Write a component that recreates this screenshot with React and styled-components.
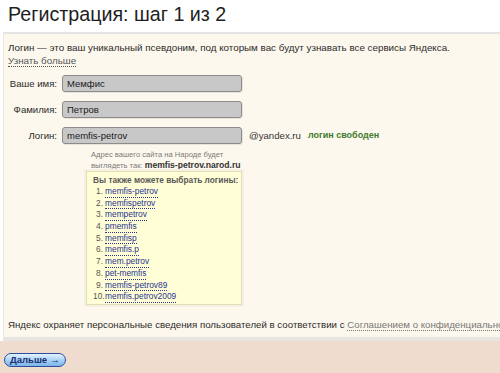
import styled, { createGlobalStyle } from "styled-components";

const GlobalStyle = createGlobalStyle`
  html, body {
    margin: 0;
    padding: 0;
    background: #fff;
  }
  body {
    font-family: "Liberation Sans", Arial, sans-serif;
    width: 500px;
    height: 373px;
    overflow: hidden;
  }
`;

const Page = styled.div`
  width: 500px;
  height: 373px;
  display: flex;
  flex-direction: column;
  overflow: hidden;
`;

const Header = styled.h1`
  margin: 0;
  height: 32px;
  box-sizing: border-box;
  padding: 3px 0 0 8px;
  font-size: 19.7px;
  font-weight: normal;
  color: #1e1e1e;
`;

const Panel = styled.div`
  margin-left: 3px;
  border-top: 2px solid #e4e4e4;
  border-left: 1px solid #ebe7dc;
  border-bottom: 4px solid #e8e5e0;
  background: #fdf8ed;
  padding: 7px 0 6px 4px;
  white-space: nowrap;
  overflow: hidden;
`;

const Intro = styled.p`
  margin: 0;
  font-size: 9.8px;
  line-height: 13px;
  color: #2b2b2b;
`;

const DottedLink = styled.a`
  color: ${(p) => p.$color || "#555"};
  text-decoration: none;
  border-bottom: 1px dotted ${(p) => p.$color || "#555"};
`;

const Form = styled.div`
  display: grid;
  grid-template-columns: 49px 180px auto;
  column-gap: 5px;
  row-gap: 9px;
  margin-top: 8px;
  align-items: center;
`;

const Label = styled.label`
  font-size: 9.6px;
  color: #2b2b2b;
  text-align: right;
`;

const Input = styled.div`
  box-sizing: border-box;
  height: 17px;
  background: #c8c8c8;
  border: 1px solid #8c8c8c;
  border-radius: 3px;
  box-shadow: 1px 1px 0 #e8e4da;
  font-size: 9.5px;
  line-height: 15px;
  padding-left: 4px;
  color: #1a1a1a;
`;

const After = styled.div`
  font-size: 9.6px;
  color: #333;
  padding-left: 2px;
  display: flex;
  gap: 7px;
`;

const Free = styled.span`
  color: #3d7a2f;
  font-weight: bold;
  font-size: 9px;
`;

const Hint = styled.div`
  grid-column: 2 / 4;
  margin-top: -4px;
  padding-left: 29px;
  font-size: 7.6px;
  line-height: 11px;
  color: #7a7a7a;
  b {
    color: #333;
    font-size: 8.6px;
  }
`;

const Suggest = styled.div`
  grid-column: 2 / 3;
  margin: -9px 0 0 24px;
  box-sizing: border-box;
  width: 156px;
  height: 134px;
  background: #fffed6;
  border: 1px solid #e4deb4;
  box-shadow: 0 0 0 2px #f4f0e4;
  padding: 2px 0 0 6px;
`;

const SuggestTitle = styled.div`
  font-size: 8.3px;
  font-weight: bold;
  color: #5a5a5a;
  line-height: 12px;
`;

const List = styled.ol`
  margin: 0;
  padding: 0;
  list-style: none;
`;

const Item = styled.li`
  display: flex;
  font-size: 8.4px;
  line-height: 11.7px;
  height: 11.7px;
`;

const Num = styled.span`
  width: 10px;
  text-align: right;
  padding-right: 2px;
  color: #555;
`;

const Legal = styled.p`
  margin: 13px 0 0;
  font-size: 9.7px;
  line-height: 13px;
  color: #2b2b2b;
`;

const Bottom = styled.div`
  flex: 1;
  background: #f0dbcf;
  padding: 12px 0 0 4px;
`;

const Next = styled.button`
  height: 14px;
  padding: 0 5px;
  border: 1px solid #2b4f9c;
  border-radius: 8px;
  background: linear-gradient(#e4f3ff, #9fcdf5 60%, #7db4e8);
  font-family: "Liberation Sans", Arial, sans-serif;
  font-size: 9.5px;
  font-weight: bold;
  line-height: 12px;
  color: #1a2f70;
  display: flex;
  align-items: center;
  gap: 3px;
  cursor: pointer;
`;

const logins = [
  "memfis-petrov",
  "memfispetrov",
  "mempetrov",
  "pmemfis",
  "memfisp",
  "memfis.p",
  "mem.petrov",
  "pet-memfis",
  "memfis-petrov89",
  "memfis.petrov2009",
];

export default function App() {
  return (
    <Page>
      <GlobalStyle />
      <Header>Регистрация: шаг 1 из 2</Header>
      <Panel>
        <Intro>
          Логин — это ваш уникальный псевдоним, под которым вас будут узнавать все сервисы Яндекса.
          <br />
          <DottedLink>Узнать больше</DottedLink>
        </Intro>
        <Form>
          <Label>Ваше имя:</Label>
          <Input>Мемфис</Input>
          <span />
          <Label>Фамилия:</Label>
          <Input>Петров</Input>
          <span />
          <Label>Логин:</Label>
          <Input>memfis-petrov</Input>
          <After>
            @yandex.ru <Free>логин свободен</Free>
          </After>
          <Hint>
            Адрес вашего сайта на Народе будет
            <br />
            выглядеть так: <b>memfis-petrov.narod.ru</b>
          </Hint>
          <Suggest>
            <SuggestTitle>Вы также можете выбрать логины:</SuggestTitle>
            <List>
              {logins.map((l, i) => (
                <Item key={l}>
                  <Num>{i + 1}.</Num>
                  <DottedLink $color="#2a3591">{l}</DottedLink>
                </Item>
              ))}
            </List>
          </Suggest>
        </Form>
        <Legal>
          Яндекс охраняет персональные сведения пользователей в соответствии с{" "}
          <DottedLink $color="#777">Соглашением о конфиденциальности</DottedLink>
        </Legal>
      </Panel>
      <Bottom>
        <Next>
          Дальше <span>→</span>
        </Next>
      </Bottom>
    </Page>
  );
}
